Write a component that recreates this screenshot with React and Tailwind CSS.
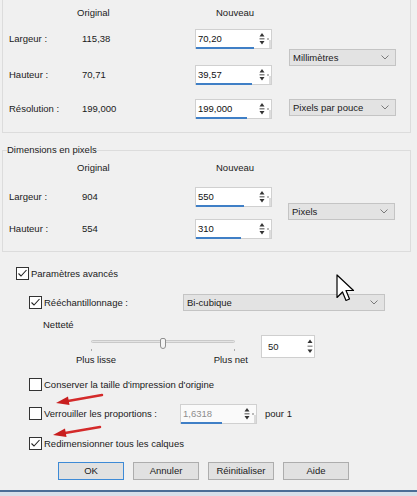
const font = { fontFamily: '"Liberation Sans", Arial, sans-serif' };

function Spinner({ small }) {
  return (
    <svg width="14" height={small ? 16 : 18} viewBox="0 0 14 18" className="shrink-0">
      <path d="M2.5 6.5 L5 3 L7.5 6.5 Z" fill="#333" />
      <rect x="2.5" y="8" width="5" height="1.5" fill="#888" />
      <path d="M2.5 11 L5 14.5 L7.5 11 Z" fill="#333" />
      <rect x="10" y="8.5" width="2" height="1" fill="#777" />
      <rect x="12.5" y="10" width="1" height="8" fill="#bbb" />
    </svg>
  );
}

function NumInput({ value, bar, disabled }) {
  return (
    <div className={`relative flex h-[20px] w-[77px] items-center border border-[#d0d0d0] ${disabled ? "bg-[#fafafa]" : "bg-white"}`}>
      <span className={`flex-1 pl-[2px] ${disabled ? "text-[#8d8d8d]" : "text-[#111]"}`}>{value}</span>
      <Spinner />
      <div className="absolute bottom-[-1px] left-0 h-[2px] bg-[#3f7fc6]" style={{ width: bar }} />
    </div>
  );
}

function Select({ label, className = "w-[107px]" }) {
  return (
    <div className={`flex h-[17px] items-center justify-between border border-[#c4c4c4] bg-[#e3e3e3] pl-[3px] pr-[6px] ${className}`}>
      <span>{label}</span>
      <svg width="8" height="5" viewBox="0 0 8 5">
        <polyline points="0.5,0.5 4,4 7.5,0.5" fill="none" stroke="#7a7a7a" strokeWidth="1" />
      </svg>
    </div>
  );
}

function Check({ checked }) {
  return (
    <div className="flex h-[13px] w-[13px] shrink-0 items-center justify-center border border-[#333] bg-white">
      {checked && (
        <svg width="11" height="11" viewBox="0 0 11 11">
          <polyline points="1.5,5.5 4,8 9.5,2" fill="none" stroke="#222" strokeWidth="1.1" />
        </svg>
      )}
    </div>
  );
}

function Button({ children, primary }) {
  return (
    <div className={`flex h-[18px] w-[66px] items-center justify-center border bg-[#e1e1e1] ${primary ? "border-[#3d8ad6]" : "border-[#adadad]"}`}>
      {children}
    </div>
  );
}

function Row({ label, orig, value, bar, className }) {
  return (
    <div className={`flex h-[21px] items-center ${className}`}>
      <span className="w-[73px]">{label}</span>
      <span className="w-[113px]">{orig}</span>
      <NumInput value={value} bar={bar} />
    </div>
  );
}

function Header() {
  return (
    <div className="flex h-[13px] items-center">
      <span className="w-[73px]" />
      <span className="-ml-[5px] w-[118px]">Original</span>
      <span className="ml-[21px]">Nouveau</span>
    </div>
  );
}

export default function App() {
  return (
    <div className="relative h-[496px] w-[417px] overflow-hidden bg-[#f0f0f0] text-[9.5px] leading-[12px] text-[#1a1a1a]" style={font}>
      {/* dimensions d'impression */}
      <div className="ml-[2px] flex h-[133px] w-[409px] border-x border-b border-[#dcdcdc]">
        <div className="w-[286px] pl-[6px] pt-[6px]">
          <Header />
          <Row label="Largeur :" orig="115,38" value="70,20" bar={58} className="mt-[9px]" />
          <Row label="Hauteur :" orig="70,71" value="39,57" bar={56} className="mt-[15px]" />
          <Row label="Résolution :" orig="199,000" value="199,000" bar={51} className="mt-[13px]" />
        </div>
        <div className="pt-[49px]">
          <Select label="Millimètres" />
          <div className="mt-[33px]">
            <Select label="Pixels par pouce" />
          </div>
        </div>
      </div>

      {/* dimensions en pixels */}
      <fieldset className="ml-[2px] mt-[11px] w-[409px] border border-[#dcdcdc] pb-[12px]">
        <legend className="ml-[4px] leading-[12px]">Dimensions en pixels</legend>
        <div className="flex">
          <div className="w-[285px] pl-[6px] pt-[5px]">
            <Header />
            <Row label="Largeur :" orig="904" value="550" bar={48} className="mt-[12px]" />
            <Row label="Hauteur :" orig="554" value="310" bar={45} className="mt-[11px]" />
          </div>
          <div className="pt-[47px]">
            <Select label="Pixels" />
          </div>
        </div>
      </fieldset>

      {/* options avancées */}
      <div className="mt-[15px] flex h-[13px] items-center pl-[16px]">
        <Check checked />
        <span className="ml-[2px]">Paramètres avancés</span>
      </div>

      <div className="mt-[14px] flex h-[17px] items-center">
        <div className="flex w-[183px] items-center pl-[29px]">
          <Check checked />
          <span className="ml-[2px]">Rééchantillonnage :</span>
        </div>
        <Select label="Bi-cubique" className="w-[202px]" />
      </div>

      <div className="mt-[8px] flex h-[12px] items-center pl-[43px]">Netteté</div>

      <div className="mt-[4px] flex">
        <div className="w-[261px] pl-[76px]">
          <div className="relative ml-[15px] h-[16px] w-[144px]">
            <div className="absolute left-0 right-0 top-[5px] h-[3px] rounded-full border border-[#c9c9c9] bg-[#e4e4e4]" />
            <div className="absolute left-[69px] top-[3px] h-[11px] w-[6px] rounded-b-[3px] rounded-t-[2px] border border-[#8f8f8f] bg-[#f4f4f4]" />
            <div className="absolute bottom-[0px] left-0 h-[2px] w-[1px] bg-[#aaa]" />
            <div className="absolute bottom-[0px] right-0 h-[2px] w-[1px] bg-[#aaa]" />
          </div>
          <div className="mt-[3px] flex h-[12px] w-[172px] items-center justify-between">
            <span>Plus lisse</span>
            <span>Plus net</span>
          </div>
        </div>
        <div className="flex h-[23px] w-[54px] items-center border border-[#cfcfcf] bg-white pl-[6px]">
          <span className="flex-1">50</span>
          <svg width="8" height="21" viewBox="0 0 8 21" className="shrink-0">
            <path d="M1.5 7 L4 3.5 L6.5 7 Z" fill="#333" />
            <rect x="1.5" y="9.5" width="5" height="1.5" fill="#999" />
            <path d="M1.5 13.5 L4 17 L6.5 13.5 Z" fill="#333" />
          </svg>
        </div>
      </div>

      <div className="mt-[12px] flex h-[13px] items-center pl-[29px]">
        <Check />
        <span className="ml-[2px]">Conserver la taille d'impression d'origine</span>
      </div>

      <div className="mt-[13px] flex h-[19px] items-center">
        <div className="flex w-[180px] items-center pl-[29px]">
          <Check />
          <span className="ml-[2px]">Verrouiller les proportions :</span>
        </div>
        <NumInput value="1,6318" bar={41} disabled />
        <span className="ml-[8px]">pour 1</span>
      </div>

      <div className="mt-[14px] flex h-[13px] items-center pl-[29px]">
        <Check checked />
        <span className="ml-[2px]">Redimensionner tous les calques</span>
      </div>

      <div className="mt-[12px] flex gap-[9px] pl-[58px]">
        <Button primary>OK</Button>
        <Button>Annuler</Button>
        <Button>Réinitialiser</Button>
        <Button>Aide</Button>
      </div>

      <div className="mt-[10px] h-[2px] bg-[#4a6d96]" />
      <div className="h-[4px] bg-[#d6dfe9]" />

      {/* flèches rouges */}
      <svg className="pointer-events-none absolute left-0 top-0" width="417" height="496">
        <line x1="102" y1="395" x2="68" y2="401" stroke="#d42a2a" strokeWidth="2.5" strokeLinecap="round" />
        <polygon points="56,403 69.5,405 68,396.5" fill="#c81e1e" />
        <line x1="100" y1="427" x2="65" y2="433" stroke="#d42a2a" strokeWidth="2.5" strokeLinecap="round" />
        <polygon points="53,435 66.5,437 65,428.5" fill="#c81e1e" />
      </svg>

      {/* curseur */}
      <svg className="pointer-events-none absolute left-[336px] top-[274px]" width="20" height="30" viewBox="0 0 20 30">
        <path
          d="M1 1 L1 23.5 L6.5 18 L10 26.5 L13.5 25 L10 16.5 L17.5 16.5 Z"
          fill="#fff"
          stroke="#000"
          strokeWidth="1.2"
          strokeLinejoin="round"
        />
      </svg>
    </div>
  );
}
